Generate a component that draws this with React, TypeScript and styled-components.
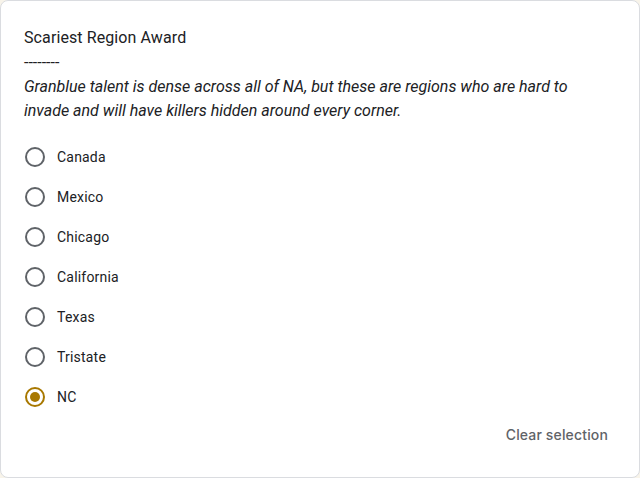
import React, { useState } from 'react';
import styled, { createGlobalStyle } from 'styled-components';

const GlobalStyle = createGlobalStyle`
  html, body {
    margin: 0;
    padding: 0;
    background: #f8f4ea;
    font-family: Roboto, "Liberation Sans", Arial, sans-serif;
  }
  * { box-sizing: border-box; }
`;

const options = ['Canada', 'Mexico', 'Chicago', 'California', 'Texas', 'Tristate', 'NC'];

export default function App() {
  const [selected, setSelected] = useState<string | null>('NC');

  return (
    <>
      <GlobalStyle />
      <Card>
        <Title>Scariest Region Award</Title>
        <Dashes>--------</Dashes>
        <Description>
          Granblue talent is dense across all of NA, but these are regions who are hard to
          invade and will have killers hidden around every corner.
        </Description>
        <OptionList>
          {options.map((opt) => (
            <OptionRow key={opt} onClick={() => setSelected(opt)}>
              <Radio $checked={selected === opt} />
              <OptionLabel>{opt}</OptionLabel>
            </OptionRow>
          ))}
        </OptionList>
        <Footer>
          <ClearButton onClick={() => setSelected(null)}>Clear selection</ClearButton>
        </Footer>
      </Card>
    </>
  );
}

const Card = styled.div`
  width: 640px;
  height: 478px;
  background: #fff;
  border: 1px solid #dadce0;
  border-radius: 8px;
  padding: 25px 23px 0 23px;
  color: #202124;
`;

const Title = styled.div`
  font-size: 16px;
  line-height: 24px;
  letter-spacing: 0.1px;
  color: #202124;
`;

const Dashes = styled.div`
  font-size: 16px;
  line-height: 24px;
  margin-top: 1px;
`;

const Description = styled.div`
  font-size: 16px;
  line-height: 24px;
  font-style: italic;
  letter-spacing: 0;
  width: 560px;
`;

const OptionList = styled.div`
  display: flex;
  flex-direction: column;
  margin-top: 14px;
`;

const OptionRow = styled.div`
  display: flex;
  align-items: center;
  height: 40px;
  cursor: pointer;
`;

const Radio = styled.span<{ $checked: boolean }>`
  position: relative;
  width: 20px;
  height: 20px;
  margin-left: 1px;
  border-radius: 50%;
  border: 2px solid ${(p) => (p.$checked ? '#a87800' : '#5f6368')};
  flex-shrink: 0;

  &::after {
    content: '';
    position: absolute;
    left: 3px;
    top: 3px;
    width: 10px;
    height: 10px;
    border-radius: 50%;
    background: #a87800;
    display: ${(p) => (p.$checked ? 'block' : 'none')};
  }
`;

const OptionLabel = styled.span`
  margin-left: 12px;
  font-size: 14px;
  letter-spacing: 0.2px;
  color: #202124;
`;

const Footer = styled.div`
  display: flex;
  justify-content: flex-end;
  margin-top: -1px;
`;

const ClearButton = styled.button`
  border: none;
  background: none;
  padding: 0 8px;
  height: 36px;
  font-family: Inter, Roboto, "Liberation Sans", Arial, sans-serif;
  font-size: 14px;
  font-weight: 500;
  letter-spacing: 0.15px;
  color: #5f6368;
  cursor: pointer;
`;
